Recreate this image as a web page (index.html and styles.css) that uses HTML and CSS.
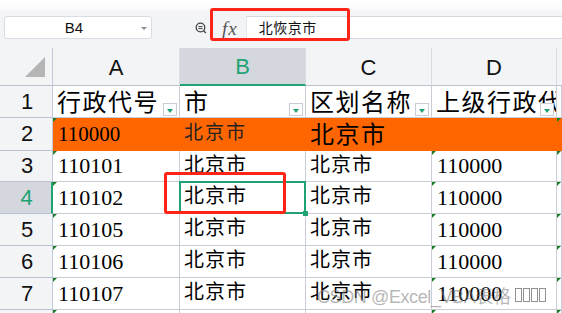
FILE: index.html
```html
<!DOCTYPE html>
<html lang="zh">
<head>
<meta charset="utf-8">
<link rel="stylesheet" href="styles.css">
</head>
<body>
<div class="app">
  <div class="formula-bar">
    <div class="namebox">B4<span class="nb-arrow"></span></div>
    <svg class="zoom-icon" width="12" height="12" viewBox="0 0 12 12"><circle cx="5.5" cy="5.5" r="4.3" fill="none" stroke="#444" stroke-width="1.3"/><line x1="3.4" y1="4.6" x2="7.6" y2="4.6" stroke="#444" stroke-width="1"/><line x1="3.4" y1="6.6" x2="7.6" y2="6.6" stroke="#444" stroke-width="1"/><line x1="8.6" y1="8.8" x2="10.8" y2="11" stroke="#444" stroke-width="1.3"/></svg>
    <span class="fx">fx</span>
    <div class="formula-input">北恢京市</div>
  </div>

  <div class="sheet">
    <div class="hd corner"><span class="corner-tri"></span></div>
    <div class="hd col">A</div>
    <div class="hd col sel">B</div>
    <div class="hd col">C</div>
    <div class="hd col">D</div>
    <div class="hd col e"></div>

    <div class="hd row">1</div>
    <div class="c cjk big">行政代号<span class="filter"></span></div>
    <div class="c cjk big">市<span class="filter"></span></div>
    <div class="c cjk big">区划名称<span class="filter"></span></div>
    <div class="c cjk big clip">上级行政代号<span class="filter"></span></div>
    <div class="c"></div>

    <div class="hd row">2</div>
    <div class="c or num tri">110000</div>
    <div class="c or cjk small">北京市</div>
    <div class="c or cjk big">北京市</div>
    <div class="c or"></div>
    <div class="c or tri"></div>

    <div class="hd row">3</div>
    <div class="c num tri">110101</div>
    <div class="c cjk">北京市</div>
    <div class="c cjk">北京市</div>
    <div class="c num tri">110000</div>
    <div class="c tri"></div>

    <div class="hd row active">4</div>
    <div class="c num tri">110102</div>
    <div class="c cjk selected">北京市<span class="handle"></span></div>
    <div class="c cjk">北京市</div>
    <div class="c num tri">110000</div>
    <div class="c tri"></div>

    <div class="hd row">5</div>
    <div class="c num tri">110105</div>
    <div class="c cjk">北京市</div>
    <div class="c cjk">北京市</div>
    <div class="c num tri">110000</div>
    <div class="c tri"></div>

    <div class="hd row">6</div>
    <div class="c num tri">110106</div>
    <div class="c cjk">北京市</div>
    <div class="c cjk">北京市</div>
    <div class="c num tri">110000</div>
    <div class="c tri"></div>

    <div class="hd row">7</div>
    <div class="c num tri">110107</div>
    <div class="c cjk">北京市</div>
    <div class="c cjk">北京市</div>
    <div class="c num tri">110000</div>
    <div class="c tri"></div>

    <div class="hd row"></div>
    <div class="c tri"></div>
    <div class="c"></div>
    <div class="c"></div>
    <div class="c tri"></div>
    <div class="c tri"></div>
  </div>

  <div class="mark mark-fx"></div>
  <div class="mark mark-cell"></div>
  <div class="watermark">CSDN @Excel_VBA表格<span class="tofu first"></span><span class="tofu"></span><span class="tofu"></span><span class="tofu"></span></div>
</div>
</body>
</html>
```

FILE: styles.css
```css
html, body {
  margin: 0;
  padding: 0;
  background: #fff;
}
.app {
  position: relative;
  width: 562px;
  height: 313px;
  overflow: hidden;
  font-family: "Liberation Sans", Arial, sans-serif;
}
.formula-bar {
  height: 48px;
  box-sizing: border-box;
  padding: 16px 0 0 4px;
  display: flex;
  align-items: flex-start;
  background: linear-gradient(#ffffff 0, #fbfbfc 8px, #f3f4f6 13px, #f3f4f6 100%);
}
.namebox {
  position: relative;
  width: 148px;
  height: 23px;
  box-sizing: border-box;
  border: 1px solid #d9dce2;
  border-radius: 3px;
  background: #fff;
  display: flex;
  align-items: center;
  justify-content: center;
  font-family: "Liberation Sans", sans-serif;
  font-size: 15px;
  color: #111;
  padding-right: 8px;
}
.nb-arrow {
  position: absolute;
  right: 4px;
  top: 10px;
  border-left: 3px solid transparent;
  border-right: 3px solid transparent;
  border-top: 3px solid #8a8f98;
}
.zoom-icon {
  margin: 6px 0 0 43px;
}
.fx {
  margin: 2px 0 0 15px;
  font-family: "Liberation Serif", serif;
  font-style: italic;
  font-size: 19px;
  color: #555;
  letter-spacing: 1px;
}
.formula-input {
  margin-left: 8px;
  flex: 1;
  height: 23px;
  box-sizing: border-box;
  background: #fff;
  border-top: 1px solid #d5d8de;
  border-bottom: 1px solid #d5d8de;
  border-left: 1px solid #e4e6ea;
  padding-left: 12px;
  font-family: "Noto Sans CJK SC", sans-serif;
  font-size: 14px;
  line-height: 21px;
  color: #111;
  letter-spacing: 0.5px;
}
.sheet {
  display: grid;
  grid-template-columns: 53px 127px 126px 126px 125px 5px;
  grid-template-rows: 38px 32px 33px 31px 32px 32px 32px 32px 10px;
}
.hd {
  background: #f3f4f6;
  border-right: 1px solid #c3c9d6;
  border-bottom: 1px solid #b9c0d0;
  box-sizing: border-box;
  display: flex;
  align-items: center;
  justify-content: center;
  font-size: 22px;
  color: #111;
}
.col {
  padding-top: 2px;
  border-right-color: #d9dce3;
}
.col.sel {
  background: #d4d7dd;
  color: #1fa372;
  border-bottom: 2px solid #1fa372;
}
.col.e {
  border-right: none;
}
.corner {
  position: relative;
}
.corner-tri {
  position: absolute;
  left: 25px;
  top: 9px;
  width: 0;
  height: 0;
  border-left: 20px solid transparent;
  border-bottom: 20px solid #b5b5b5;
}
.row {
  padding-left: 2px;
}
.row.active {
  background: #d4d7dd;
  color: #1fa372;
  border-right: 2px solid #1fa372;
}
.c {
  position: relative;
  box-sizing: border-box;
  border-right: 1px solid #c8cdd8;
  border-bottom: 1px solid #c8cdd8;
  display: flex;
  align-items: center;
  padding-left: 4px;
  white-space: nowrap;
  color: #000;
}
.c.clip {
  overflow: hidden;
}
.num {
  font-family: "Liberation Serif", serif;
  font-size: 22px;
  line-height: 24px;
  padding-left: 5px;
}
.cjk {
  font-family: "Noto Sans CJK SC", sans-serif;
  font-size: 20px;
  line-height: 24px;
  letter-spacing: 1px;
  padding-bottom: 5px;
}
.cjk.big {
  font-size: 24px;
  line-height: 27px;
  letter-spacing: 1.5px;
  padding-bottom: 3px;
}
.cjk.small {
  font-size: 19px;
  line-height: 22px;
  letter-spacing: 2px;
  padding-bottom: 7px;
  color: #222;
}
.or {
  background: #ff6600;
  border-color: #ff6600;
}
.or.num {
  font-size: 21px;
}
.tri::before {
  content: "";
  position: absolute;
  left: 0;
  top: 0;
  border-top: 4px solid #1b7d28;
  border-right: 4px solid transparent;
}
.filter {
  position: absolute;
  right: 2px;
  bottom: 1px;
  width: 14px;
  height: 13px;
  box-sizing: border-box;
  background: #fff;
  border: 1px solid #c9cdd6;
}
.filter::after {
  content: "";
  position: absolute;
  left: 3px;
  top: 5px;
  border-left: 3px solid transparent;
  border-right: 3px solid transparent;
  border-top: 4px solid #1fa372;
}
.selected::after {
  content: "";
  position: absolute;
  left: -1px;
  top: -1px;
  right: -1px;
  bottom: -1px;
  border: 2px solid #1fa372;
  pointer-events: none;
}
.handle {
  position: absolute;
  right: -3px;
  bottom: -3px;
  width: 5px;
  height: 5px;
  background: #1fa372;
  z-index: 2;
}
.mark {
  position: absolute;
  border: 3px solid #ff2418;
  border-radius: 3px;
  box-sizing: border-box;
}
.mark-fx {
  left: 210px;
  top: 8px;
  width: 140px;
  height: 33px;
}
.mark-cell {
  left: 164px;
  top: 172px;
  width: 122px;
  height: 42px;
}
.watermark {
  position: absolute;
  left: 317px;
  top: 282px;
  font-family: "Liberation Sans", "Noto Sans CJK SC", sans-serif;
  font-size: 18px;
  letter-spacing: -0.4px;
  color: rgba(120, 120, 120, 0.55);
  white-space: nowrap;
  display: flex;
  align-items: center;
}
.tofu {
  display: inline-block;
  width: 5px;
  height: 12px;
  border: 1.5px solid rgba(110, 110, 110, 0.75);
  margin-left: 1px;
}
.tofu.first {
  margin-left: 4px;
}
```
